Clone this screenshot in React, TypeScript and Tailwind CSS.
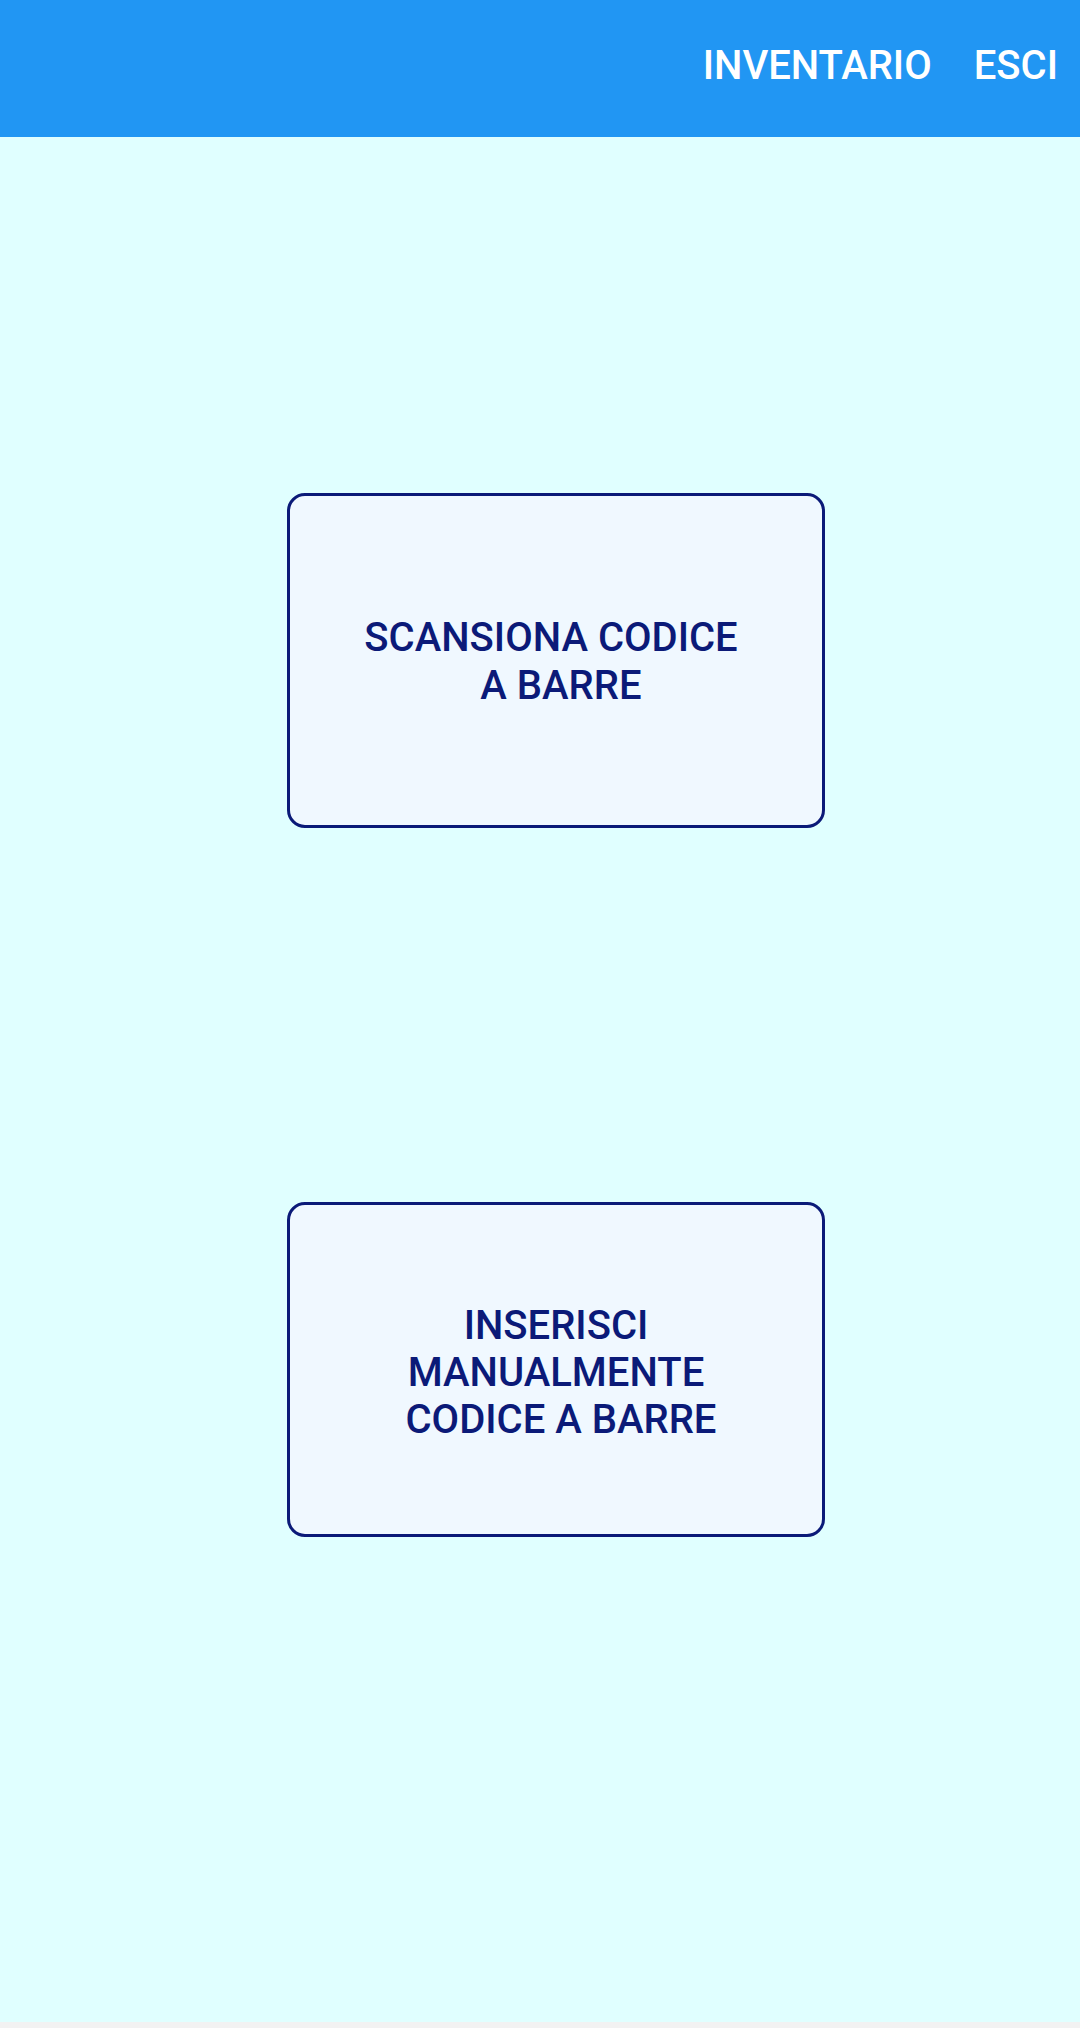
export default function App() {
  return (
    <div className="flex h-[2028px] w-[1080px] flex-col bg-[#f2f2f2] font-['Roboto',sans-serif]">
      {/* Top bar */}
      <div className="flex h-[137px] shrink-0 items-center justify-end gap-[42px] bg-[#2196F3] pr-[22px] pb-[6px] text-[40px] font-medium text-white">
        <span>INVENTARIO</span>
        <span>ESCI</span>
      </div>

      {/* Content */}
      <div className="flex h-[1885px] flex-col items-start bg-[#E0FFFF] pt-[356px] pl-[287px]">
        <button className="flex h-[335px] w-[538px] items-center justify-center whitespace-pre rounded-[18px] border-[3px] border-[#0b1a78] bg-[#F0F8FF] pt-[3px] text-center text-[40px] leading-[48px] font-medium text-[#0b1a78]">
          {"SCANSIONA CODICE "}
          <br />
          {" A BARRE"}
        </button>
        <button className="mt-[374px] flex h-[335px] w-[538px] items-center justify-center whitespace-pre rounded-[18px] border-[3px] border-[#0b1a78] bg-[#F0F8FF] pt-[5px] text-center text-[40px] leading-[47px] font-medium text-[#0b1a78]">
          {"INSERISCI"}
          <br />
          {"MANUALMENTE"}
          <br />
          {" CODICE A BARRE"}
        </button>
      </div>
    </div>
  );
}
